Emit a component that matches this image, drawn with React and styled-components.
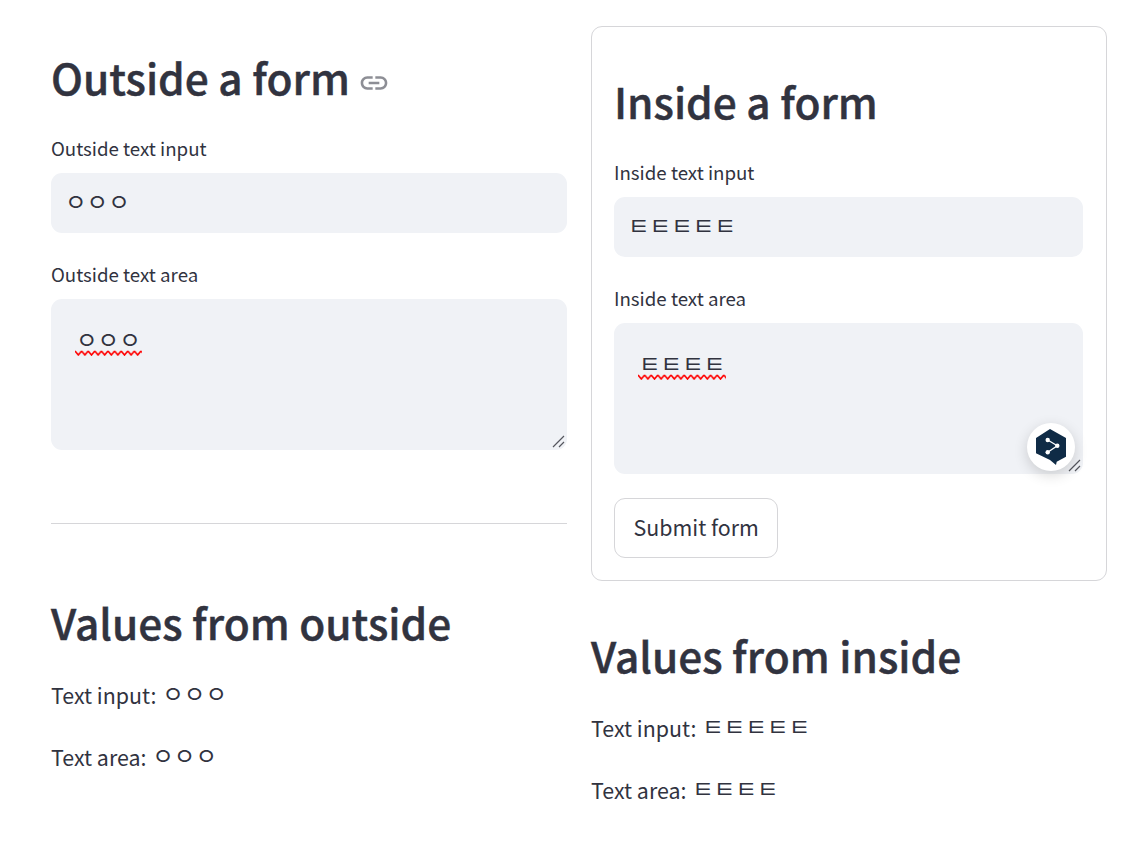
import React from 'react';
import styled, {createGlobalStyle} from 'styled-components';

const GlobalStyle = createGlobalStyle`
  html, body {
    margin: 0;
    padding: 0;
    background: #fff;
  }
  body {
    font-family: "Noto Sans CJK KR", "Noto Sans", sans-serif;
    color: #31333f;
  }
`;

const Page = styled.div`
  display: grid;
  grid-template-columns: 516px 516px;
  column-gap: 24px;
  padding: 26px 25px 0 51px;
  width: 1132px;
  height: 864px;
  box-sizing: border-box;
  overflow: hidden;
`;

const Column = styled.div`
  display: flex;
  flex-direction: column;
  min-width: 0;
`;

const FormBox = styled.form`
  display: flex;
  flex-direction: column;
  height: 555px;
  box-sizing: border-box;
  margin: 0;
  padding: 44px 23px 0 22px;
  border: 1px solid #d6d6d9;
  border-radius: 11px;
`;

const Heading = styled.h2`
  display: flex;
  align-items: center;
  gap: 8px;
  margin: 0;
  font-size: 42.4px;
  font-weight: 500;
  -webkit-text-stroke: 0.45px #31333f;
  line-height: 60px;
  color: #31333f;
`;

const FirstHeading = styled(Heading)`
  margin-top: 21px;
`;

const LinkMark = styled.svg`
  width: 32px;
  height: 32px;
  margin-top: 12px;
  color: #8d8e95;
`;

const Field = styled.div`
  display: flex;
  flex-direction: column;
`;

const Label = styled.label`
  font-size: 18.7px;
  line-height: 28px;
  color: #31333f;
  margin-top: 27px;
  margin-bottom: 11px;
`;

const TextInput = styled.input`
  display: block;
  width: 100%;
  height: 60px;
  box-sizing: border-box;
  padding: 0 14px 4px;
  border: none;
  border-radius: 11px;
  outline: none;
  background: #f0f2f6;
  color: #31333f;
  font-family: inherit;
  font-size: 23.5px;
`;

const AreaBox = styled.div`
  position: relative;
  height: 151px;
  box-sizing: border-box;
  padding: 24px 25px;
  border-radius: 11px;
  background: #f0f2f6;
  font-size: 23.5px;
  line-height: 32px;
`;

const Misspelled = styled.span`
  position: relative;
  display: inline-block;
`;

const Squiggle = styled.svg`
  position: absolute;
  left: -1px;
  bottom: -1px;
  width: calc(100% + 2px);
  height: 6px;
`;

const Grip = styled.svg`
  position: absolute;
  right: 2px;
  bottom: 2px;
  width: 13px;
  height: 13px;
`;

const Badge = styled.div`
  position: absolute;
  right: 8px;
  bottom: 3px;
  width: 48px;
  height: 48px;
  display: flex;
  align-items: center;
  justify-content: center;
  border-radius: 50%;
  background: #fff;
  box-shadow: 0 4px 14px rgba(0, 0, 0, .16);
`;

const SubmitButton = styled.button`
  align-self: flex-start;
  height: 60px;
  margin-top: 24px;
  padding: 0 18.5px 4px;
  border: 1px solid #d6d6d9;
  border-radius: 11px;
  background: #fff;
  color: #31333f;
  font-family: inherit;
  font-size: 21.4px;
`;

const Divider = styled.hr`
  width: 100%;
  margin: 73px 0 0;
  border: none;
  border-top: 1px solid #d6d6d9;
`;

const Values = styled.div`
  display: flex;
  flex-direction: column;
`;

const ValueLine = styled.p`
  height: 32px;
  margin: 0 0 30px;
  font-size: 21.4px;
  line-height: 32px;
  color: #31333f;
`;

const Jamo = styled.span`
  font-size: 23.5px;
  line-height: 1;
  margin-left: 1px;
  vertical-align: 1px;
`;

const LeftValuesHeading = styled(Heading)`
  margin-top: 68px;
  margin-bottom: 27px;
`;

const RightValuesHeading = styled(Heading)`
  margin-top: 44px;
  margin-bottom: 27px;
`;

const LinkIcon = () => (
  <LinkMark viewBox="0 0 24 24" fill="currentColor">
    <path d="M3.9 12c0-1.71 1.39-3.1 3.1-3.1h4V7H7c-2.76 0-5 2.24-5 5s2.24 5 5 5h4v-1.9H7c-1.71 0-3.1-1.39-3.1-3.1zM8 13h8v-2H8v2zm9-6h-4v1.9h4c1.71 0 3.1 1.39 3.1 3.1s-1.39 3.1-3.1 3.1h-4V17h4c2.76 0 5-2.24 5-5s-2.24-5-5-5z" />
  </LinkMark>
);

const ResizeGrip = () => (
  <Grip viewBox="0 0 13 13" fill="none" stroke="#55565e" strokeWidth="1.2">
    <path d="M1 12 L12 1 M7 12 L12 7" />
  </Grip>
);

// wavy spell check line, repeated along the word
const SpellLine = () => (
  <Squiggle>
    <defs>
      <pattern id="wave" width="6.6" height="6" patternUnits="userSpaceOnUse">
        <path d="M0 1 L3.3 5 L6.6 1" fill="none" stroke="#ff0000" strokeWidth="1.6" />
      </pattern>
    </defs>
    <rect width="100%" height="6" fill="url(#wave)" />
  </Squiggle>
);

const DeepLBadge = () => (
  <Badge>
    <svg width="30" height="36" viewBox="0 0 30 36">
      <path d="M14 0 L30 9 V27.7 L20.7 32.7 L20 36 L14 31 L0 24.3 V9 Z" fill="#0f2b46" />
      <path d="M11.7 11 L21.3 16.7 L11.7 23.3" fill="none" stroke="#fff" strokeWidth="1.3" />
      <circle cx="11.7" cy="11" r="2.2" fill="#fff" />
      <circle cx="21.3" cy="16.7" r="2.2" fill="#fff" />
      <circle cx="11.7" cy="23.3" r="2.2" fill="#fff" />
    </svg>
  </Badge>
);

const App = () => {
  return (
    <Page>
      <GlobalStyle />
      <Column>
        <FirstHeading>
          Outside a form
          <LinkIcon />
        </FirstHeading>
        <Field>
          <Label>Outside text input</Label>
          <TextInput readOnly value="ㅇㅇㅇ" />
        </Field>
        <Field>
          <Label>Outside text area</Label>
          <AreaBox>
            <Misspelled>ㅇㅇㅇ<SpellLine /></Misspelled>
            <ResizeGrip />
          </AreaBox>
        </Field>
        <Divider />
        <LeftValuesHeading>Values from outside</LeftValuesHeading>
        <Values>
          <ValueLine>Text input: <Jamo>ㅇㅇㅇ</Jamo></ValueLine>
          <ValueLine>Text area: <Jamo>ㅇㅇㅇ</Jamo></ValueLine>
        </Values>
      </Column>
      <Column>
        <FormBox>
          <Heading>Inside a form</Heading>
          <Field>
            <Label>Inside text input</Label>
            <TextInput readOnly value="ㅌㅌㅌㅌㅌ" />
          </Field>
          <Field>
            <Label>Inside text area</Label>
            <AreaBox>
              <Misspelled>ㅌㅌㅌㅌ<SpellLine /></Misspelled>
              <ResizeGrip />
              <DeepLBadge />
            </AreaBox>
          </Field>
          <SubmitButton type="button">Submit form</SubmitButton>
        </FormBox>
        <RightValuesHeading>Values from inside</RightValuesHeading>
        <Values>
          <ValueLine>Text input: <Jamo>ㅌㅌㅌㅌㅌ</Jamo></ValueLine>
          <ValueLine>Text area: <Jamo>ㅌㅌㅌㅌ</Jamo></ValueLine>
        </Values>
      </Column>
    </Page>
  );
};

export default App;
